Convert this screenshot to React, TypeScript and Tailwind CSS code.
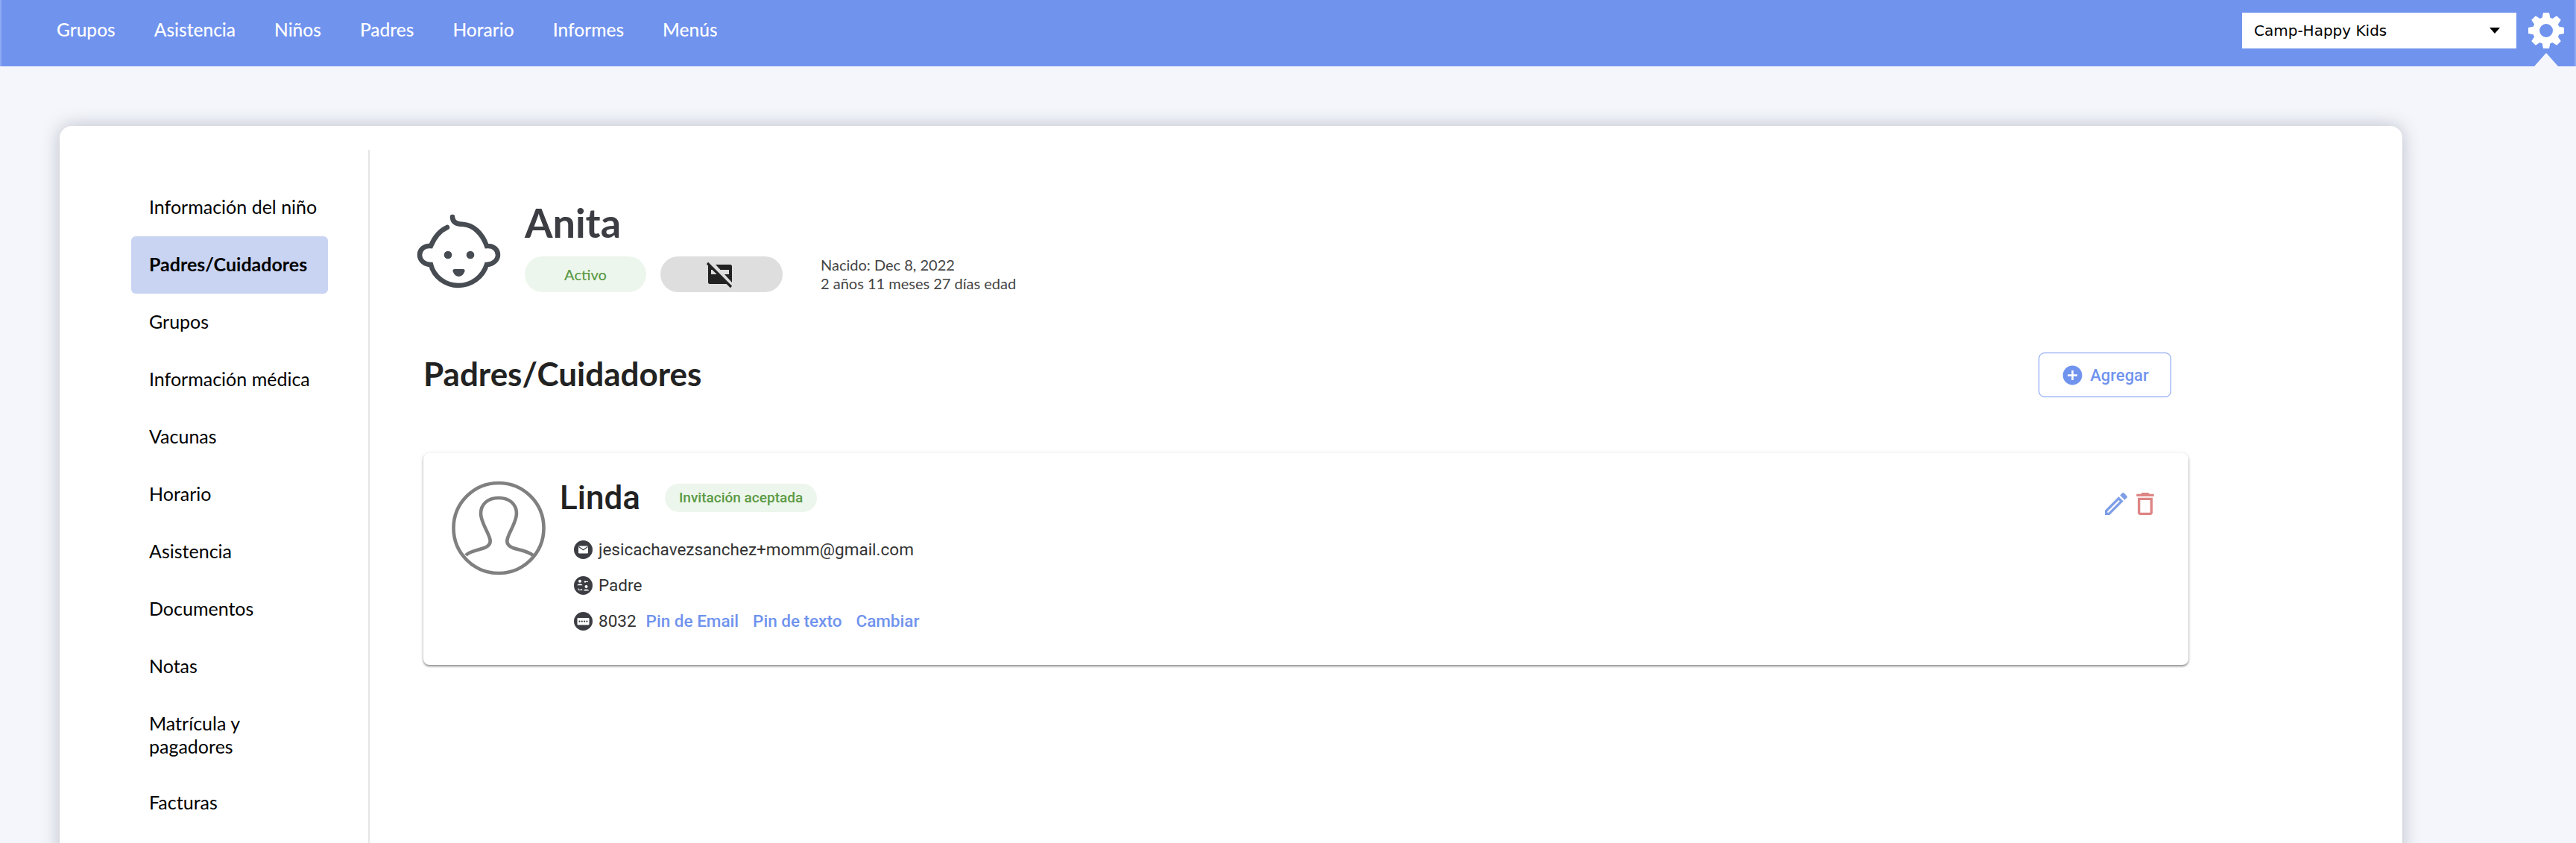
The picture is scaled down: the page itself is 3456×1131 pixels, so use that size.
import { MdOutlineEdit, MdOutlineDelete, MdAddCircle } from "react-icons/md";

const nav = ["Grupos", "Asistencia", "Niños", "Padres", "Horario", "Informes", "Menús"];
const side = [
  "Información del niño",
  "Padres/Cuidadores",
  "Grupos",
  "Información médica",
  "Vacunas",
  "Horario",
  "Asistencia",
  "Documentos",
  "Notas",
  "Matrícula y pagadores",
  "Facturas",
];

function Gear() {
  const angles = [0, 45, 90, 135, 180, 225, 270, 315];
  return (
    <svg width="48" height="48" viewBox="0 0 48 48" className="shrink-0">
      {angles.map((a) => (
        <polygon key={a} points="20,0 28,0 30,10 18,10" fill="#fff" transform={`rotate(${a} 24 24)`} />
      ))}
      <circle cx="24" cy="24" r="13.5" fill="none" stroke="#fff" strokeWidth="9" />
    </svg>
  );
}

function Baby() {
  return (
    <svg width="130" height="115" viewBox="0 0 130 115" className="shrink-0">
      <path
        d="M50 25C41 29 33 38 28 50C19 49 13 55 13 62C13 69 19 75 28 75C32 91 47 103 65 103C83 103 98 91 103 75C111 75 118 69 118 62C118 55 112 49 103 50C97 33 85 22 72 21C62 21 57 18 57 11"
        fill="none"
        stroke="#474b52"
        strokeWidth="6.5"
        strokeLinecap="round"
      />
      <circle cx="51" cy="62" r="5.3" fill="#474b52" />
      <circle cx="81" cy="62" r="5.3" fill="#474b52" />
      <path d="M60 81H71Q74 81 73.5 84Q71 91 65.5 91Q60 91 57.5 84Q57 81 60 81Z" fill="#474b52" />
    </svg>
  );
}

function Avatar() {
  return (
    <svg width="140" height="140" viewBox="0 0 140 140" className="shrink-0">
      <g fill="none" stroke="#808080" strokeWidth="4.6">
        <circle cx="69" cy="70.5" r="60.5" />
        <path d="M25 107C30 101 42 100 50 97C57 94 59 90 57 84C54 74 45 62 45 51C45 38 55 30 69 30C83 30 93 38 93 51C93 62 84 74 81 84C79 90 81 94 88 97C96 100 108 101 115 107" />
      </g>
    </svg>
  );
}

function NoCard() {
  return (
    <svg width="60" height="50" viewBox="0 0 60 50">
      <rect x="12" y="12" width="32" height="26" rx="2.5" fill="#222" />
      <rect x="16" y="19" width="24" height="6" fill="#dedede" />
      <path d="M12 8L44 43" stroke="#dedede" strokeWidth="6" transform="translate(1.5 -1)" />
      <path d="M11 10L43 42" stroke="#222" strokeWidth="3.2" />
    </svg>
  );
}

function MailDot() {
  return (
    <svg width="25" height="25" viewBox="0 0 25 25" className="shrink-0">
      <circle cx="12.5" cy="12.5" r="12.5" fill="#3c3d43" />
      <rect x="6" y="7.5" width="13" height="10" rx="1.2" fill="#fff" />
      <path d="M6.5 8.5L12.5 12.8L18.5 8.5" fill="none" stroke="#3c3d43" strokeWidth="1.1" />
    </svg>
  );
}

function RelDot() {
  return (
    <svg width="25" height="25" viewBox="0 0 25 25" className="shrink-0">
      <circle cx="12.5" cy="12.5" r="12.5" fill="#3c3d43" />
      <circle cx="8" cy="6.8" r="2" fill="#fff" />
      <path d="M4.5 12.2C4.5 9.8 11.5 9.8 11.5 12.2Z" fill="#fff" />
      <circle cx="16.5" cy="14" r="2" fill="#fff" />
      <path d="M13 19.5C13 17 20 17 20 19.5Z" fill="#fff" />
      <path d="M14 7.5H19M14 7.5L15.5 6M14 7.5L15.5 9M6 16.5V18.5H11M11 18.5L9.5 17" fill="none" stroke="#fff" strokeWidth="1" />
    </svg>
  );
}

function PinDot() {
  return (
    <svg width="25" height="25" viewBox="0 0 25 25" className="shrink-0">
      <circle cx="12.5" cy="12.5" r="12.5" fill="#3c3d43" />
      <rect x="4.5" y="8" width="16" height="9.5" rx="1" fill="#fff" />
      {[7.5, 10.8, 14.1, 17.4].map((x) => (
        <circle key={x} cx={x} cy="12.7" r="1.1" fill="#3c3d43" />
      ))}
    </svg>
  );
}

export default function App() {
  return (
    <div className="relative h-[1131px] overflow-hidden bg-[#f4f6fb] font-['Lato','Liberation_Sans',sans-serif]">
      <header className="flex h-[89px] items-start border-x-2 border-[#8ea9f1] bg-[#7093ee]">
        <nav className="flex pt-[25px] pl-[74px] text-[24.5px] leading-[30px] font-medium text-white">
          {nav.map((n) => (
            <span key={n} className="mr-[52px]">{n}</span>
          ))}
        </nav>
        <div className="ml-auto mt-[17px] flex h-[48px] w-[368px] items-center justify-between bg-white pr-[22px] pl-[16px] font-['DejaVu_Sans',sans-serif] text-[20px] text-black">
          <span>Camp-Happy Kids</span>
          <svg width="14" height="8" viewBox="0 0 14 8"><path d="M0 0H14L7 8Z" fill="#000" /></svg>
        </div>
        <div className="relative mr-[14px] ml-[16px] h-[89px] w-[48px] pt-[17px]">
          <Gear />
          <div className="absolute bottom-0 left-[8px] h-0 w-0 border-x-[16px] border-b-[18px] border-x-transparent border-b-[#f4f6fb]" />
        </div>
      </header>
      <main className="pt-[80px] pl-[80px]">
        <div className="flex h-[1000px] w-[3143px] rounded-t-[16px] bg-white pt-[32px] shadow-[0_0_24px_rgba(40,45,70,0.28)]">
          <aside className="w-[416px] border-r-2 border-[#e6e6e6] pt-[39px] pl-[96px]">
            <ul className="w-[264px] text-[25px] leading-[31px] text-black">
              {side.map((s, i) => (
                <li
                  key={s}
                  className={
                    i === 1
                      ? "rounded-[6px] bg-[#c9d4f2] pt-[22px] pr-[8px] pb-[24px] pl-[24px] font-bold"
                      : i === 9
                        ? "pt-[22px] pr-[40px] pb-[22px] pl-[24px]"
                        : "pt-[22px] pr-[8px] pb-[24px] pl-[24px]"
                  }
                >
                  {s}
                </li>
              ))}
            </ul>
          </aside>
          <section className="flex-1 pt-[84px] pl-[72px]">
            <div className="-ml-[18px] flex items-start">
              <div className="-mt-[5px]"><Baby /></div>
              <div className="ml-[24px] -mt-[20px]">
                <h1 className="text-[54px] leading-[68px] font-bold text-[#3c3d43]">Anita</h1>
                <div className="mt-[10px] flex items-center">
                  <span className="flex h-[48px] w-[163px] items-center justify-center rounded-full bg-[#edf6ec] text-[20px] font-medium text-[#5b9a45]">Activo</span>
                  <span className="ml-[19px] flex h-[48px] w-[164px] items-center justify-center rounded-full bg-[#dedede]"><NoCard /></span>
                  <div className="ml-[51px] text-[20px] leading-[25px] text-[#444]">
                    <p>Nacido: Dec 8, 2022</p>
                    <p>2 años 11 meses 27 días edad</p>
                  </div>
                </div>
              </div>
            </div>
            <div className="mt-[78px] flex w-[2345px] items-center justify-between">
              <h2 className="-mt-[4px] text-[44px] leading-[60px] font-bold text-[#222]">Padres/Cuidadores</h2>
              <button className="flex h-[60px] w-[178px] items-center justify-center gap-[8px] rounded-[8px] border-[1.5px] border-[#7093ee] font-['Roboto',sans-serif] text-[22px] font-medium text-[#7093ee]">
                <MdAddCircle size={31} />
                Agregar
              </button>
            </div>
            <article className="mt-[75px] flex h-[284px] w-[2368px] rounded-[8px] bg-white pt-[30px] pl-[32px] font-['Roboto',sans-serif] shadow-[0_2px_3px_rgba(0,0,0,0.42),0_0_6px_rgba(0,0,0,0.07)]">
              <Avatar />
              <div className="ml-[11px] flex-1 pt-[4px]">
                <div className="flex items-center">
                  <h3 className="text-[44px] leading-[52px] font-medium text-[#222]">Linda</h3>
                  <span className="ml-[33px] flex h-[38px] items-center rounded-full bg-[#edf6ec] px-[19px] text-[19px] font-medium text-[#5b9a45]">Invitación aceptada</span>
                </div>
                <div className="mt-[31px] ml-[19px] flex flex-col gap-[23px] text-[22.5px] leading-[25px] text-[#333]">
                  <div className="flex items-center gap-[8px]"><MailDot /><span>jesicachavezsanchez+momm@gmail.com</span></div>
                  <div className="flex items-center gap-[8px]"><RelDot /><span>Padre</span></div>
                  <div className="flex items-center gap-[8px]">
                    <PinDot />
                    <span>8032</span>
                    <span className="ml-[5px] text-[22.5px] font-medium text-[#7093ee]">Pin de Email</span>
                    <span className="ml-[11px] text-[22.5px] font-medium text-[#7093ee]">Pin de texto</span>
                    <span className="ml-[11px] text-[22.5px] font-medium text-[#7093ee]">Cambiar</span>
                  </div>
                </div>
              </div>
              <div className="mt-[18px] mr-[38px] flex h-[40px]">
                <MdOutlineEdit size={40} className="text-[#7f9ee6]" />
                <MdOutlineDelete size={40} className="-ml-[1px] text-[#de8484]" />
              </div>
            </article>
          </section>
        </div>
      </main>
    </div>
  );
}
